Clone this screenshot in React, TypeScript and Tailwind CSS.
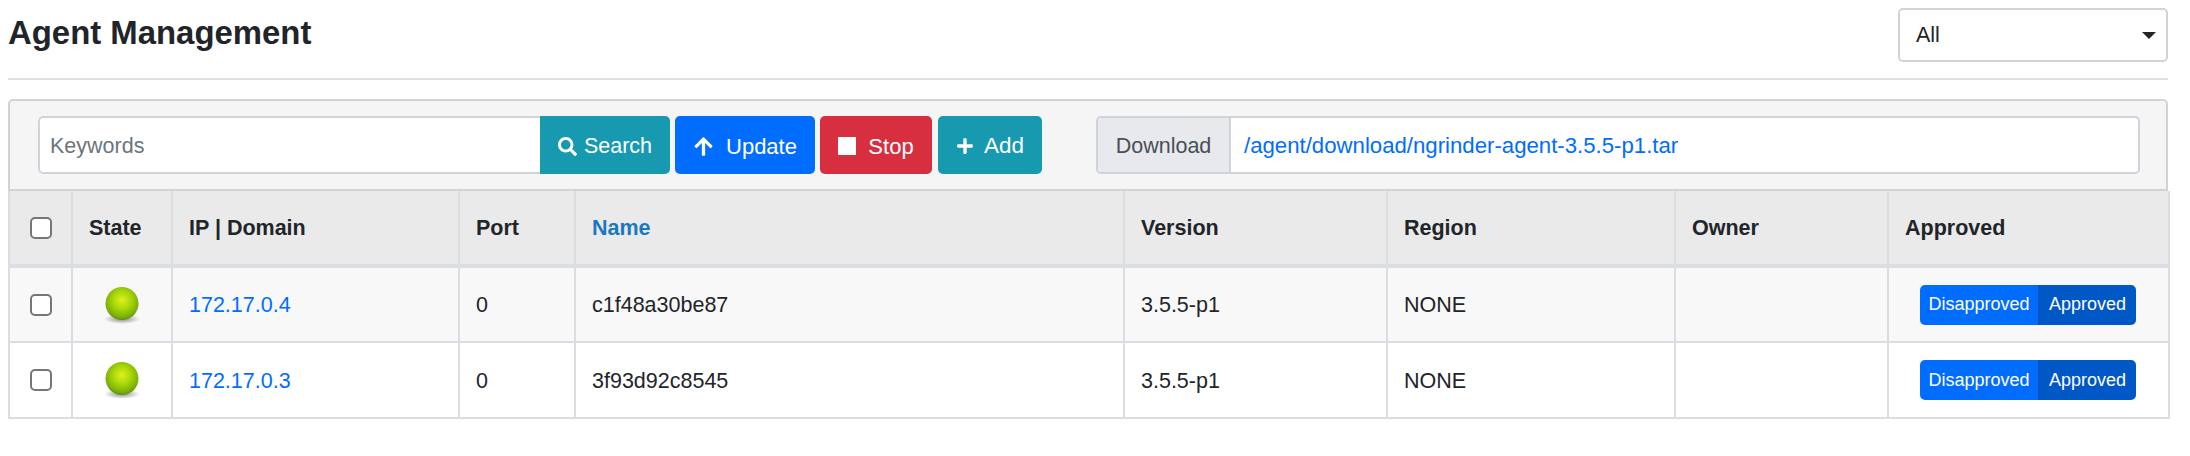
import { FaArrowUp, FaPlus, FaSearch } from 'react-icons/fa';

const Ball = () => (
  <svg width="36" height="38" viewBox="0 0 36 38" className="mx-auto block">
    <defs>
      <radialGradient id="ballFill" cx="0.5" cy="0.4" r="0.6">
        <stop offset="0" stopColor="#e2f01c" />
        <stop offset="0.45" stopColor="#a8d80a" />
        <stop offset="0.85" stopColor="#7ab008" />
        <stop offset="1" stopColor="#5f8f12" />
      </radialGradient>
      <radialGradient id="ballShadow">
        <stop offset="0" stopColor="#000" stopOpacity="0.45" />
        <stop offset="1" stopColor="#000" stopOpacity="0" />
      </radialGradient>
    </defs>
    <ellipse cx="18" cy="33" rx="18" ry="5" fill="url(#ballShadow)" />
    <circle cx="18" cy="17.5" r="16.5" fill="url(#ballFill)" />
  </svg>
);

const Check = () => (
  <span className="mx-auto block h-[22px] w-[22px] rounded-[5px] border-2 border-[#767676] bg-white" />
);

const Toggle = () => (
  <div className="ml-[31px] flex h-10 w-[216px] overflow-hidden rounded-[5px] text-[18px] text-white">
    <span className="flex w-[118px] items-center justify-center bg-[#006dff]">Disapproved</span>
    <span className="flex flex-1 items-center justify-center border-l border-[#0050b8] bg-[#0058c6]">Approved</span>
  </div>
);

const headers = ['State', 'IP | Domain', 'Port', 'Name', 'Version', 'Region', 'Owner', 'Approved'];

const agents = [
  { ip: '172.17.0.4', name: 'c1f48a30be87', bg: 'bg-[#f8f8f8]' },
  { ip: '172.17.0.3', name: '3f93d92c8545', bg: 'bg-white' },
];

const App = () => {
  return (
    <div className="h-[456px] w-[2190px] bg-white pl-2 pr-[22px] font-['Liberation_Sans',Arial,sans-serif] text-[21.5px] text-[#212529]">
      <div className="flex h-[78px] items-start justify-between">
        <h2 className="mt-[14px] text-[32.9px] leading-[38px] font-bold">Agent Management</h2>
        <div className="mt-2 flex h-[54px] w-[270px] items-center justify-between rounded-[5px] border-2 border-[#ced4da] pr-[10px] pl-4">
          <span className="pt-px">All</span>
          <svg width="14" height="7" viewBox="0 0 14 7"><path d="M0 0h14L7 7z" fill="#212529" /></svg>
        </div>
      </div>
      <div className="h-0.5 bg-[#dcdfe3]" />

      <div className="mt-[19px] flex h-[92px] items-start rounded-t-[5px] border-2 border-[#d3d3d3] bg-[#f5f5f5] pt-[15px] pr-[26px] pl-[28px]">
        <div className="flex h-[58px] w-[632px] overflow-hidden rounded-[5px]">
          <div className="flex flex-1 items-center rounded-l-[5px] border-2 border-r-0 border-[#ced4da] bg-white pt-0.5 pl-[10px] text-[#6c757d]">Keywords</div>
          <button className="flex w-[130px] items-center justify-center gap-[7px] bg-[#1799b0] pt-0.5 text-white">
            <FaSearch className="h-[19px] w-[19px]" />
            Search
          </button>
        </div>
        <button className="ml-[5px] flex h-[58px] w-[140px] items-center justify-center gap-[12px] rounded-[5px] bg-[#006dff] pt-0.5 text-[22px] text-white">
          <FaArrowUp className="h-[21px] w-[21px]" />
          Update
        </button>
        <button className="ml-[5px] flex h-[58px] w-[112px] items-center justify-center gap-3 rounded-[5px] bg-[#d82f40] pt-0.5 text-[22px] text-white">
          <span className="h-[18px] w-[18px] bg-white" />
          Stop
        </button>
        <button className="ml-1.5 flex h-[58px] w-[104px] items-center justify-center gap-[10px] rounded-[5px] bg-[#1799b0] pt-0.5 text-[22.5px] text-white">
          <FaPlus className="h-[18px] w-[18px]" />
          Add
        </button>
        <div className="ml-[54px] flex h-[58px] flex-1 rounded-[5px] border-2 border-[#ced4da] bg-white">
          <div className="flex w-[133px] items-center justify-center rounded-l-[3px] border-r-2 border-[#ced4da] bg-[#e7e9ed] pt-0.5 text-[#495057]">Download</div>
          <a className="flex items-center pt-0.5 pl-[13px] text-[22.2px] text-[#006dff]">/agent/download/ngrinder-agent-3.5.5-p1.tar</a>
        </div>
      </div>

      <table className="w-[2160px] table-fixed border-collapse">
        <colgroup>
          <col className="w-[63px]" />
          <col className="w-[100px]" />
          <col className="w-[287px]" />
          <col className="w-[116px]" />
          <col className="w-[549px]" />
          <col className="w-[263px]" />
          <col className="w-[288px]" />
          <col className="w-[213px]" />
          <col className="w-[281px]" />
        </colgroup>
        <thead>
          <tr className="h-[75px] bg-[#eaeaea]">
            <th className="border-x-2 border-b-4 border-[#dadee2]"><Check /></th>
            {headers.map((h) => (
              <th
                key={h}
                className={`border-x-2 border-b-4 border-[#dadee2] px-4 pt-px text-left font-bold ${h === 'Name' ? 'text-[#1a78c2]' : ''} ${h === 'State' ? 'text-center' : ''}`}
              >
                {h}
              </th>
            ))}
          </tr>
        </thead>
        <tbody>
          {agents.map((a) => (
            <tr key={a.ip} className={`h-[76px] ${a.bg}`}>
              <td className="border-2 border-[#dadee2]"><Check /></td>
              <td className="border-2 border-[#dadee2]"><Ball /></td>
              <td className="border-2 border-[#dadee2] px-4 pt-0.5 text-[#006dff]">{a.ip}</td>
              <td className="border-2 border-[#dadee2] px-4 pt-0.5">0</td>
              <td className="border-2 border-[#dadee2] px-4 pt-0.5">{a.name}</td>
              <td className="border-2 border-[#dadee2] px-4 pt-0.5">3.5.5-p1</td>
              <td className="border-2 border-[#dadee2] px-4 pt-0.5">NONE</td>
              <td className="border-2 border-[#dadee2] px-4" />
              <td className="border-2 border-[#dadee2]"><Toggle /></td>
            </tr>
          ))}
        </tbody>
      </table>
    </div>
  );
};

export default App;
